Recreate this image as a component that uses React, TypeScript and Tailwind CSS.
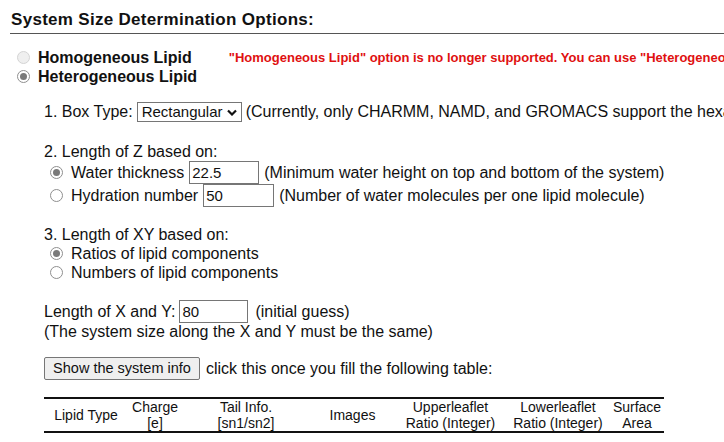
import React from 'react';

function Radio({ checked = false, disabled = false }: { checked?: boolean; disabled?: boolean }) {
  return (
    <span
      className={
        'inline-flex w-[13px] h-[13px] rounded-full border items-center justify-center shrink-0 ' +
        (disabled ? 'border-[#d4d4d4] bg-[#efefef]' : 'border-[#8f8f8f] bg-white')
      }
    >
      {checked && <span className="w-[7px] h-[7px] rounded-full bg-[#7a7a7a]" />}
    </span>
  );
}

function Field({ value, width }: { value: string; width: string }) {
  return (
    <span
      className={
        'inline-flex items-center h-[23px] border border-[#767676] bg-white px-[2px] text-[15px] ' + width
      }
    >
      {value}
    </span>
  );
}

const columns = [
  { w: 'w-[84px]', lines: ['Lipid Type'] },
  { w: 'w-[54px]', lines: ['Charge', '[e]'] },
  { w: 'w-[128px]', lines: ['Tail Info.', '[sn1/sn2]'] },
  { w: 'w-[85px]', lines: ['Images'] },
  { w: 'w-[111px]', lines: ['Upperleaflet', 'Ratio (Integer)'] },
  { w: 'w-[104px]', lines: ['Lowerleaflet', 'Ratio (Integer)'] },
  { w: 'w-[54px]', lines: ['Surface', 'Area'] },
];

export default function App() {
  return (
    <div
      className="w-[724px] h-[442px] overflow-hidden bg-white text-[#111] pl-[10px] pt-[10px]"
      style={{ fontFamily: '"Liberation Sans", Arial, sans-serif' }}
    >
      {/* Heading */}
      <div className="border-b border-[#555] pb-[3px] pl-[1px] w-[800px]">
        <h2 className="text-[17px] font-bold leading-[20px] tracking-[0.3px]">System Size Determination Options:</h2>
      </div>

      {/* Lipid type */}
      <div className="mt-[14px] pl-[7px] whitespace-nowrap">
        <div className="flex items-center h-[19px]">
          <Radio disabled />
          <span className="ml-[8px] text-[16px] font-bold shrink-0">Homogeneous Lipid</span>
          <span className="ml-[37px] text-[13px] font-bold text-[#e01010]">
            "Homogeneous Lipid" option is no longer supported. You can use "Heterogeneous Lipid" instead.
          </span>
        </div>
        <div className="flex items-center h-[19px]">
          <Radio checked />
          <span className="ml-[8px] text-[16px] font-bold">Heterogeneous Lipid</span>
        </div>
      </div>

      <div className="ml-[34px] text-[16px] whitespace-nowrap">
        {/* 1 */}
        <div className="mt-[16px] flex items-center h-[20px]">
          <span className="shrink-0">1. Box Type:</span>
          <span className="ml-[4px] shrink-0 inline-flex items-center h-[20px] w-[105px] border border-[#767676] pl-[4px] text-[15px]">
            Rectangular
            <svg className="ml-[4px]" width="10" height="7" viewBox="0 0 10 7">
              <path d="M1 1.5 L5 5.5 L9 1.5" fill="none" stroke="#111" strokeWidth="2.2" />
            </svg>
          </span>
          <span className="ml-[4px]">(Currently, only CHARMM, NAMD, and GROMACS support the hexagonal box.)</span>
        </div>

        {/* 2 */}
        <div className="mt-[21px] h-[18px] flex items-center">2. Length of Z based on:</div>
        <div className="pl-[6px]">
          <div className="flex items-center h-[23px]">
            <Radio checked />
            <span className="ml-[8px]">Water thickness</span>
            <span className="ml-[5px]"><Field value="22.5" width="w-[70px]" /></span>
            <span className="ml-[5px]">(Minimum water height on top and bottom of the system)</span>
          </div>
          <div className="flex items-center h-[23px]">
            <Radio />
            <span className="ml-[8px]">Hydration number</span>
            <span className="ml-[5px]"><Field value="50" width="w-[71px]" /></span>
            <span className="ml-[5px]">(Number of water molecules per one lipid molecule)</span>
          </div>
        </div>

        {/* 3 */}
        <div className="mt-[19px] h-[18px] flex items-center">3. Length of XY based on:</div>
        <div className="pl-[6px]">
          <div className="flex items-center h-[19px]">
            <Radio checked />
            <span className="ml-[8px]">Ratios of lipid components</span>
          </div>
          <div className="flex items-center h-[19px]">
            <Radio />
            <span className="ml-[8px]">Numbers of lipid components</span>
          </div>
        </div>

        {/* XY */}
        <div className="mt-[18px] flex items-center h-[23px]">
          <span>Length of X and Y:</span>
          <span className="ml-[4px]"><Field value="80" width="w-[69px]" /></span>
          <span className="ml-[7px]">(initial guess)</span>
        </div>
        <div className="h-[18px] flex items-center">(The system size along the X and Y must be the same)</div>

        {/* button */}
        <div className="mt-[16px] flex items-center h-[23px]">
          <button className="h-[23px] w-[156px] border border-[#767676] bg-[#efefef] text-[14.5px] rounded-[2px]">
            Show the system info
          </button>
          <span className="ml-[6px]">click this once you fill the following table:</span>
        </div>

        {/* table */}
        <div className="mt-[17px] flex w-[620px] border-t-2 border-b-2 border-[#111] h-[36px] text-[14px] leading-[16px]">
          {columns.map((c) => (
            <div key={c.lines[0]} className={'flex flex-col items-center justify-center text-center ' + c.w}>
              {c.lines.map((l) => (
                <span key={l}>{l}</span>
              ))}
            </div>
          ))}
        </div>
      </div>
    </div>
  );
}
